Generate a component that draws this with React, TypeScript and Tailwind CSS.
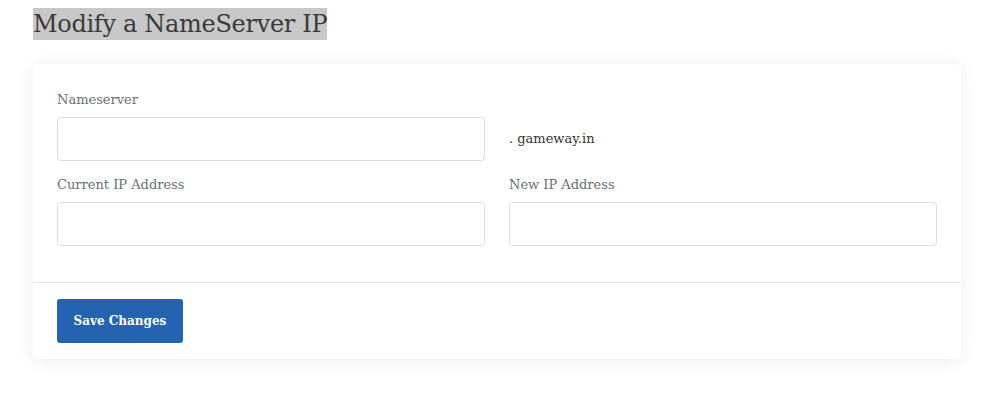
export default function App() {
  const font = { fontFamily: '"DejaVu Serif", "Liberation Serif", serif' };
  return (
    <div className="min-h-screen bg-white pl-[33px] pr-[44px] pt-2" style={font}>
      <h1 className="inline-block bg-[#c8c8c8] text-[24px] font-light leading-[32px] text-[#3a3a3a] tracking-[-0.3px]">
        Modify a NameServer IP
      </h1>
      <div className="mt-6 rounded-md bg-white shadow-[0_2px_18px_rgba(0,0,0,0.07)]">
        <div className="px-6 pt-6 pb-9">
          <div className="grid grid-cols-2 gap-x-6">
            <div>
              <label className="mb-1.5 block text-[13px] leading-[23px] text-[#6b6f76]">Nameserver</label>
              <input className="block h-11 w-full rounded border border-[#dedede] px-3 outline-none" />
            </div>
            <div className="flex items-end">
              <span className="flex h-11 items-center text-[13px] text-[#333]">. gameway.in</span>
            </div>
            <div className="mt-3">
              <label className="mb-1.5 block text-[13px] leading-[23px] text-[#6b6f76]">Current IP Address</label>
              <input className="block h-11 w-full rounded border border-[#dedede] px-3 outline-none" />
            </div>
            <div className="mt-3">
              <label className="mb-1.5 block text-[13px] leading-[23px] text-[#6b6f76]">New IP Address</label>
              <input className="block h-11 w-full rounded border border-[#dedede] px-3 outline-none" />
            </div>
          </div>
        </div>
        <div className="border-t border-[#e8e8e8] px-6 py-4">
          <button className="h-11 w-[126px] rounded-[3px] bg-[#2463b0] text-[12px] font-bold text-white">
            Save Changes
          </button>
        </div>
      </div>
    </div>
  );
}
